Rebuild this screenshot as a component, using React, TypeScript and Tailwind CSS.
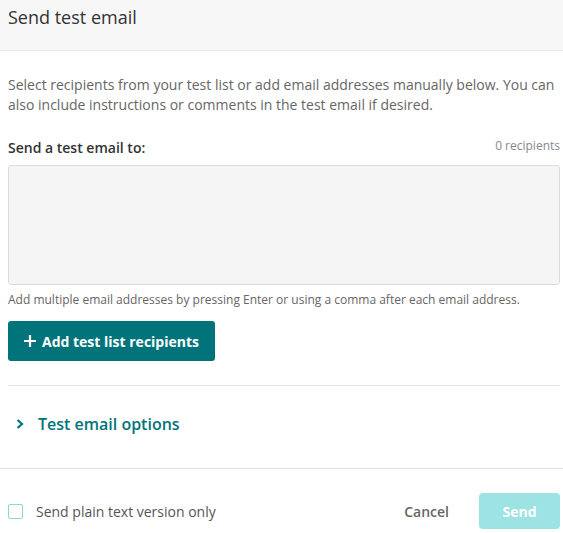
import React, { useState } from 'react'

const font = { fontFamily: '"Open Sans", "Noto Sans", sans-serif' }

export default function App() {
  const [plain, setPlain] = useState(false)

  return (
    <div className="h-[533px] w-[563px] bg-white" style={font}>
      {/* Header */}
      <div className="h-[51px] border-b border-[#e6e6e6] bg-[#f7f7f7] pl-2 pt-[5px]">
        <h1 className="text-[18px] font-normal leading-[24px] text-[#333]">Send test email</h1>
      </div>

      {/* Body */}
      <div className="pl-2 pr-[3px]">
        <p className="mt-[24px] text-[14px] leading-[20px] text-[#666]">
          Select recipients from your test list or add email addresses manually below. You can
          also include instructions or comments in the test email if desired.
        </p>

        <div className="mt-[23px] flex items-end justify-between">
          <label className="text-[14px] font-semibold leading-[20px] text-[#333]">
            Send a test email to:
          </label>
          <span className="mb-[4px] text-[12px] leading-[16px] text-[#888]">0 recipients</span>
        </div>

        <textarea className="mt-[7px] block h-[120px] w-full resize-none rounded-[3px] border border-[#dcdcdc] bg-[#f5f5f5] outline-none" />

        <p className="mt-[7px] text-[12px] leading-[16px] text-[#666]">
          Add multiple email addresses by pressing Enter or using a comma after each email address.
        </p>

        <button className="mt-[13px] flex h-10 w-[207px] items-center justify-center gap-[6px] rounded-[3px] bg-[#00747a] text-[14px] font-bold text-white">
          <svg width="12" height="12" viewBox="0 0 12 12" fill="none">
            <path d="M6 0v12M0 6h12" stroke="white" strokeWidth="2.2" />
          </svg>
          Add test list recipients
        </button>

        <div className="mt-6 border-t border-[#e3e3e3]" />

        <button className="mt-[26px] flex items-center gap-[14px] pl-[8px] text-[16px] font-semibold text-[#00747a]">
          <svg width="8" height="10" viewBox="0 0 8 10" fill="none">
            <path d="M1.5 1l4.5 4-4.5 4" stroke="#00747a" strokeWidth="2.2" />
          </svg>
          Test email options
        </button>
      </div>

      {/* Footer */}
      <div className="mt-[32px] flex items-center justify-between border-t border-[#e3e3e3] pl-2 pr-[3px] pt-[24px]">
        <label className="flex items-center gap-[13px] text-[14px] text-[#555]">
          <input
            type="checkbox"
            checked={plain}
            onChange={() => setPlain(!plain)}
            className="h-[15px] w-[15px] appearance-none rounded-[2px] border border-[#8fd6d6] bg-white"
          />
          Send plain text version only
        </label>
        <div className="flex items-center">
          <button className="mr-[30px] text-[14px] font-semibold text-[#666]">Cancel</button>
          <button className="h-9 w-[81px] rounded-[4px] bg-[#9de3e3] text-[14px] font-bold text-white">
            Send
          </button>
        </div>
      </div>
    </div>
  )
}
